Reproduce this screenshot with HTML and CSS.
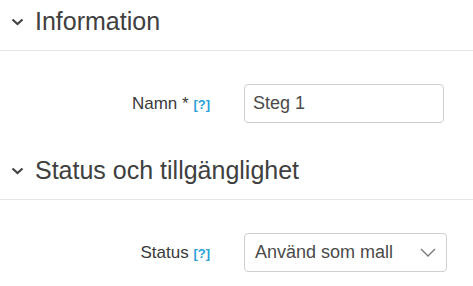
FILE: index.html
```html
<!DOCTYPE html>
<html lang="sv">

<head>
    <meta charset="UTF-8">
    <meta name="viewport" content="width=device-width, initial-scale=1.0">
    <title>Steg</title>
    <link rel="stylesheet" href="styles.css">
</head>

<body>
    <div class="section-head">
        <svg class="toggle" width="13" height="8" viewBox="0 0 13 8"><path d="M1.5 1.5 L6.5 6 L11.5 1.5" fill="none" stroke="#444" stroke-width="2.2"/></svg>
        <h3>Information</h3>
    </div>

    <div class="row">
        <label for="name">Namn * <span class="help">[?]</span></label>
        <input type="text" id="name" value="Steg 1">
    </div>

    <div class="section-head second">
        <svg class="toggle" width="13" height="8" viewBox="0 0 13 8"><path d="M1.5 1.5 L6.5 6 L11.5 1.5" fill="none" stroke="#444" stroke-width="2.2"/></svg>
        <h3>Status och tillgänglighet</h3>
    </div>

    <div class="row">
        <label for="status">Status <span class="help">[?]</span></label>
        <div class="select" id="status">
            <span>Använd som mall</span>
            <svg width="16" height="9" viewBox="0 0 16 9"><path d="M1 1 L8 8 L15 1" fill="none" stroke="#777" stroke-width="1.3"/></svg>
        </div>
    </div>
</body>

</html>
```

FILE: styles.css
```css
* {
    margin: 0;
    box-sizing: border-box;
}

body {
    background-color: white;
    color: #3a3a3a;
    font-family: "Liberation Sans", Arial, sans-serif;
}

.section-head {
    display: flex;
    align-items: center;
    gap: 11px;
    padding: 6px 0 14px 11px;
    border-bottom: 1px solid #e6e6e6;
}

.section-head h3 {
    font-size: 25px;
    font-weight: normal;
    line-height: 30px;
    color: #404040;
}

.toggle {
    margin-top: 1px;
}

.row {
    display: grid;
    grid-template-columns: 210px 203px;
    column-gap: 34px;
    align-items: center;
    padding: 33px 0 26px;
}

.row label {
    text-align: right;
    font-size: 17px;
    color: #3a3a3a;
}

.help {
    color: #2a9fd6;
    font-size: 13px;
    font-weight: bold;
}

input, .select {
    height: 39px;
    border: 1px solid #cfcfcf;
    border-radius: 4px;
    font-family: inherit;
    font-size: 18px;
    color: #4a4a4a;
}

input {
    width: 200px;
    padding: 0 8px;
}

.select {
    display: flex;
    align-items: center;
    justify-content: space-between;
    padding: 0 10px 0 10px;
}
```
